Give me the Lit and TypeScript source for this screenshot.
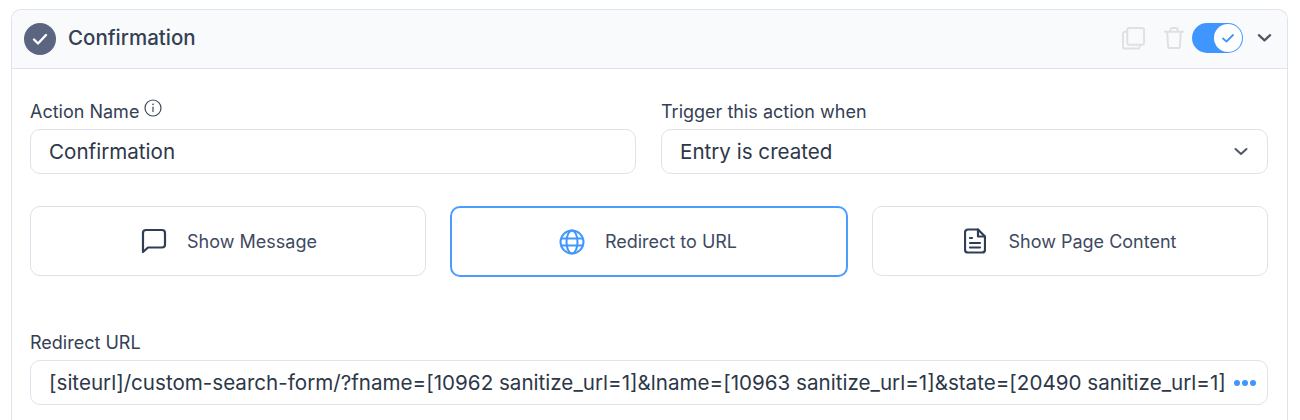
import { LitElement, html, css } from "lit";
import { customElement } from "lit/decorators.js";

@customElement("app-root")
export class AppRoot extends LitElement {
  static styles = css`
    :host { display: block; width: 1300px; height: 420px; overflow: hidden; background: #fff; font-family: Inter, "Liberation Sans", sans-serif; color: #2d3748; }
    .page { padding: 9px 12px 0 11px; }
    .card { border: 1px solid #e0e2ec; border-bottom: none; border-radius: 10px 10px 0 0; height: 420px; box-sizing: border-box; }
    .head { height: 59px; box-sizing: border-box; display: flex; align-items: center; padding: 0 15px 0 12px; background: #f9fafc; border-bottom: 1px solid #e0e2ec; border-radius: 10px 10px 0 0; }
    .badge { width: 32px; height: 32px; border-radius: 50%; background: #5b6580; display: flex; align-items: center; justify-content: center; margin-right: 12px; }
    .title { font-size: 20.5px; font-weight: 500; color: #344054; flex: 1; padding-bottom: 3px; }
    .ctl { display: flex; align-items: center; padding-bottom: 2px; }
    .copy { margin-right: 19px; }
    .trash { margin-right: 8px; }
    .toggle { width: 51px; height: 30px; border-radius: 15px; background: #4096ff; display: flex; align-items: center; justify-content: flex-end; padding-right: 1px; box-sizing: border-box; margin-right: 14px; }
    .knob { width: 28px; height: 28px; border-radius: 50%; background: #fff; display: flex; align-items: center; justify-content: center; }
    .body { padding: 0 19px 0 18px; }
    .row { display: grid; grid-template-columns: 606px 607px; gap: 25px; padding-top: 30px; }
    label { display: flex; align-items: flex-start; gap: 5px; height: 24px; font-size: 18px; line-height: 26px; color: #344054; margin-bottom: 6px; }
    .input { height: 45px; box-sizing: border-box; border: 1px solid #e0e2ec; border-radius: 10px; display: flex; align-items: center; justify-content: space-between; padding: 0 18px; font-size: 20.6px; color: #2d3748; white-space: nowrap; }
    .btns { display: grid; grid-template-columns: 396px 398px 396px; gap: 24px; margin-top: 32px; }
    .btn { height: 70px; box-sizing: border-box; border: 1px solid #dfe1ea; border-radius: 10px; display: flex; align-items: center; justify-content: center; gap: 20px; font-size: 18px; color: #3d4a5f; }
    .btn.msg { padding-left: 2px; }
    .btn.on { height: 71px; border: 2px solid #4a9dff; padding-right: 2px; }
    .btn.doc { gap: 23px; }
    .url { margin-top: 53px; }
    .url .input { padding: 0 11px 0 18px; }
    .dots { display: flex; gap: 2px; }
    .dots i { width: 6px; height: 6px; border-radius: 50%; background: #4096ff; }
  `;

  render() {
    return html`<div class="page"><div class="card">
      <div class="head">
        <div class="badge"><svg width="18" height="18" viewBox="0 0 18 18" fill="none" stroke="#fff" stroke-width="2.4" stroke-linecap="round" stroke-linejoin="round"><path d="M3 9.500l4 4 8-8.500"/></svg></div>
        <div class="title">Confirmation</div>
        <div class="ctl">
          <svg class="copy" width="23" height="24" viewBox="0 0 24 24" fill="none" stroke="#dfe0e3" stroke-width="2" stroke-linejoin="round"><rect x="5.500" y="1.500" width="17.500" height="17.500" rx="2"/><path d="M5.500 5.500H3a2 2 0 0 0-2 2V21a2 2 0 0 0 2 2h13.500a2 2 0 0 0 2-2v-2"/></svg>
          <svg class="trash" width="20" height="24" viewBox="0 0 22 24" fill="none" stroke="#dfe0e3" stroke-width="2.200" stroke-linecap="round" stroke-linejoin="round"><path d="M1 5h20M7 5V3a2 2 0 0 1 2-2h4a2 2 0 0 1 2 2v2M3.500 5l1 16a2 2 0 0 0 2 2h9a2 2 0 0 0 2-2l1-16"/></svg>
          <div class="toggle"><div class="knob"><svg width="16" height="14" viewBox="0 0 16 14" fill="none" stroke="#4096ff" stroke-width="1.800" stroke-linecap="round" stroke-linejoin="round"><path d="M3 7.500l3.500 3L13 4"/></svg></div></div>
          <svg width="15" height="10" viewBox="0 0 16 10" fill="none" stroke="#4f5666" stroke-width="2.400" stroke-linecap="round" stroke-linejoin="round"><path d="M2 2l6 5.500L14 2"/></svg>
        </div>
      </div>
      <div class="body">
        <div class="row">
          <div>
            <label>Action Name <svg width="18" height="18" viewBox="0 0 18 18" fill="none" stroke="#3d4a5f" stroke-width="1.200" stroke-linecap="round"><circle cx="9" cy="9" r="8"/><path d="M9 8.200v4.400"/><path d="M9 5.400v.1" stroke-width="1.600"/></svg></label>
            <div class="input">Confirmation</div>
          </div>
          <div>
            <label>Trigger this action when</label>
            <div class="input">Entry is created<svg width="16" height="10" viewBox="0 0 16 10" fill="none" stroke="#4f5666" stroke-width="2" stroke-linecap="round" stroke-linejoin="round"><path d="M2.500 2l5.500 5 5.500-5"/></svg></div>
          </div>
        </div>
        <div class="btns">
          <div class="btn msg"><svg width="26" height="26" viewBox="0 0 26 26" fill="none" stroke="#2f3e55" stroke-width="2.200" stroke-linejoin="round"><path d="M2 24V5a3 3 0 0 1 3-3h16a3 3 0 0 1 3 3v11.500a3 3 0 0 1-3 3H7z"/></svg><span>Show Message</span></div>
          <div class="btn on"><svg width="26" height="26" viewBox="0 0 26 26" fill="none" stroke="#4096ff" stroke-width="2"><circle cx="13" cy="13" r="11.500"/><ellipse cx="13" cy="13" rx="5.500" ry="11.500"/><path d="M2 9.500h22M2 16.500h22"/></svg><span>Redirect to URL</span></div>
          <div class="btn doc"><svg width="22" height="26" viewBox="0 0 22 26" fill="none" stroke="#2f3e55" stroke-width="2.200" stroke-linecap="round" stroke-linejoin="round"><path d="M14 1.500H4a3 3 0 0 0-3 3v17a3 3 0 0 0 3 3h14a3 3 0 0 0 3-3V8.500z"/><path d="M14 1.500v7h7"/><path d="M6 10h2M6 15h10M6 19.500h10"/></svg><span>Show Page Content</span></div>
        </div>
        <div class="url">
          <label>Redirect URL</label>
          <div class="input"><span>[siteurl]/custom-search-form/?fname=[10962 sanitize_url=1]&amp;lname=[10963 sanitize_url=1]&amp;state=[20490 sanitize_url=1]</span><div class="dots"><i></i><i></i><i></i></div></div>
        </div>
      </div>
    </div></div>`;
  }
}
